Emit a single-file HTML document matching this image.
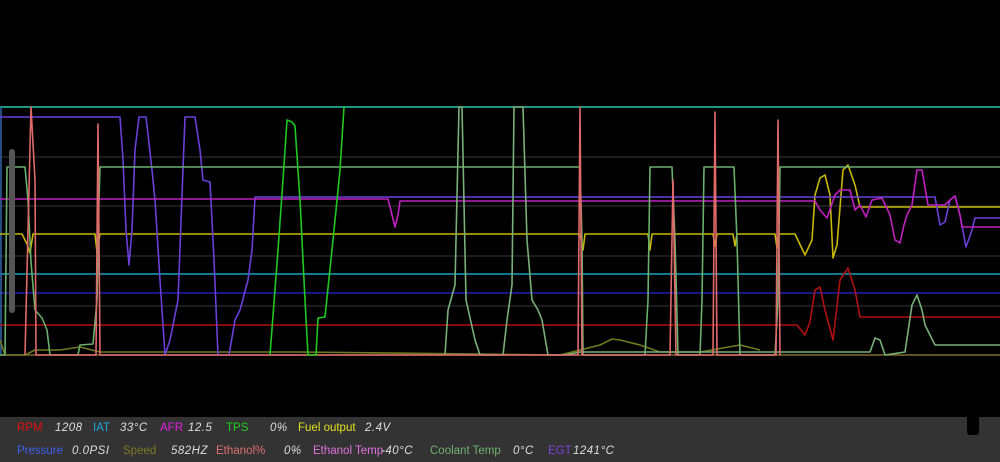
<!DOCTYPE html>
<html><head><meta charset="utf-8"><style>
html,body{margin:0;padding:0;background:#000;width:1000px;height:462px;overflow:hidden;font-family:"Liberation Sans",sans-serif}
#chart{position:absolute;left:0;top:0}
#bar{position:absolute;left:0;top:417px;width:1000px;height:45px;background:#333}
.t{position:absolute;font-size:11.5px;white-space:nowrap}
.v{position:absolute;font-size:11.5px;color:#ddd;font-style:italic;white-space:nowrap;letter-spacing:0.5px}
</style></head><body>
<svg id="chart" width="1000" height="417" viewBox="0 0 1000 417">
<g stroke="#262626" stroke-width="1.5">
<line x1="0" y1="157" x2="1000" y2="157"/><line x1="0" y1="206" x2="1000" y2="206"/>
<line x1="0" y1="256" x2="1000" y2="256"/><line x1="0" y1="306" x2="1000" y2="306"/>
</g>
<g fill="none" stroke-width="1.6" stroke-linejoin="round">
<line x1="0" y1="107" x2="1000" y2="107" stroke="#2cc8b2"/>
<line x1="0" y1="274" x2="1000" y2="274" stroke="#18a0c0"/>
<line x1="0" y1="293" x2="1000" y2="293" stroke="#2020b0"/>
<line x1="0" y1="355" x2="1000" y2="355" stroke="#806a30"/>
<line x1="1" y1="107" x2="1" y2="355" stroke="#3060a0"/>
<polyline stroke="#b01010" points="0,325 797,325 805,335 810,322 815,290 820,287 825,310 833,340 840,280 848,268 855,290 860,317 1000,317"/>
<polyline stroke="#6e7a20" points="0,340 5,355 25,355 35,350 60,350 80,347 100,352 300,352 560,355 600,345 612,339 620,340 640,345 660,352 700,352 740,345 760,350"/>
<polyline stroke="#c8b800" points="0,234 22,234 27,244 30,253 33,234 95,234 97,252 100,234 580,234 583,250 585,234 648,234 650,250 652,234 713,234 715,246 717,234 733,234 735,246 737,234 775,234 777,248 779,234 795,234 805,255 812,240 815,195 820,178 825,175 830,195 833,258 837,245 843,170 848,165 855,185 860,207 1000,207"/>
<polyline stroke="#6a40d8" points="0,117 120,117 123,160 126,230 129,265 132,230 135,150 139,117 146,117 152,170 155,200 160,280 165,355 170,340 178,300 185,117 195,117 200,150 203,180 210,182 214,260 218,355 229,355 235,320 240,310 248,280 252,250 255,197 935,197 940,225 945,222 950,200 955,196 960,215 966,247 972,230 975,218 1000,218"/>
<polyline stroke="#c020c0" points="0,199 388,199 392,215 395,227 398,215 400,201 815,201 820,210 827,218 835,195 840,190 850,190 855,210 860,205 866,217 872,200 882,198 890,215 895,240 900,243 904,225 907,215 912,205 917,170 922,170 928,205 945,205 950,200 955,196 960,215 962,227 1000,227"/>
<polyline stroke="#6ab06a" points="0,355 5,355 7,167 25,167 28,200 31,262 35,310 42,318 47,330 50,355 78,355 80,345 93,344 97,300 99,200 100,167 580,167 582,240 583,355 645,355 648,300 650,167 672,167 675,240 678,355 700,355 702,300 704,167 734,167 737,240 740,355 775,355 778,300 780,167 1000,167"/>
<polyline stroke="#78b078" points="445,355 448,310 455,285 459,107 462,107 466,300 475,340 480,355 503,355 507,320 512,285 514,107 523,107 527,240 532,300 538,310 542,320 548,355 565,355 580,352 600,352 870,352 875,338 880,340 885,355 905,352 912,305 917,295 922,310 925,325 935,345 1000,345"/>
<polyline stroke="#e06a6a" points="25,355 31,107 35,180 36,355 96,355 98,124 100,355 578,355 580,107 582,355 670,355 673,180 676,355 713,355 715,112 717,355 776,355 778,120 780,355"/>
<polyline stroke="#20c820" points="270,355 278,250 283,180 287,120 292,122 295,126 300,200 305,300 308,355 316,355 318,318 325,317 333,240 340,170 344,107"/>
</g>
<rect x="9" y="149" width="6" height="164" rx="3" fill="#555"/>
</svg>
<div id="bar">
<div style="position:absolute;left:967px;top:0;width:12px;height:18px;background:#000;border-radius:0 0 3px 3px"></div>
</div>
<div class="t" style="left:17px;top:422px;color:#e01010">RPM</div><div class="v" style="left:55px;top:422px">1208</div>
<div class="t" style="left:93px;top:422px;color:#20a8e0">IAT</div><div class="v" style="left:120px;top:422px">33°C</div>
<div class="t" style="left:160px;top:422px;color:#e020e0">AFR</div><div class="v" style="left:188px;top:422px">12.5</div>
<div class="t" style="left:226px;top:422px;color:#20d020">TPS</div><div class="v" style="left:270px;top:422px">0%</div>
<div class="t" style="left:298px;top:422px;color:#e0e020">Fuel output</div><div class="v" style="left:365px;top:422px">2.4V</div>
<div class="t" style="left:17px;top:445px;color:#4060f0">Pressure</div><div class="v" style="left:72px;top:445px">0.0PSI</div>
<div class="t" style="left:123px;top:445px;color:#7a7a20">Speed</div><div class="v" style="left:171px;top:445px">582HZ</div>
<div class="t" style="left:216px;top:445px;color:#e07070">Ethanol%</div><div class="v" style="left:284px;top:445px">0%</div>
<div class="t" style="left:313px;top:445px;color:#e070e0">Ethanol Temp</div><div class="v" style="left:381px;top:445px">-40°C</div>
<div class="t" style="left:430px;top:445px;color:#70b070">Coolant Temp</div><div class="v" style="left:513px;top:445px">0°C</div>
<div class="t" style="left:548px;top:445px;color:#8040e0">EGT</div><div class="v" style="left:573px;top:445px">1241°C</div>
</body></html>
